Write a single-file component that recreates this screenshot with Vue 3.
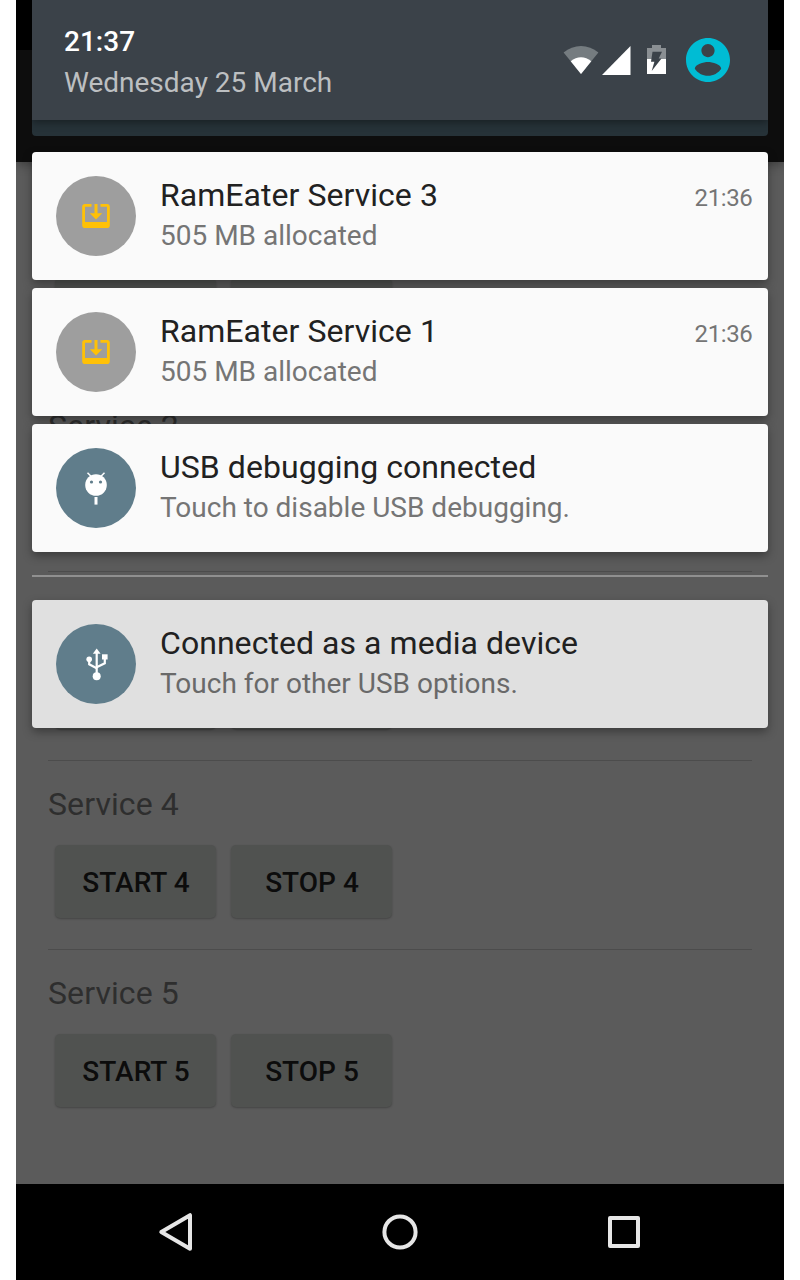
<script setup>
// Sections covered by notification cards leave out their hidden labels.
const services = [
  { id: 1, title: '', start: '', stop: '' },
  { id: 2, title: 'Service 2', start: '', stop: '' },
  { id: 3, title: '', start: '', stop: '' },
  { id: 4, title: 'Service 4', start: 'START 4', stop: 'STOP 4' },
  { id: 5, title: 'Service 5', start: 'START 5', stop: 'STOP 5' },
]
const notifications = [
  { icon: 'ram', title: 'RamEater Service 3', text: '505 MB allocated', time: '21:36' },
  { icon: 'ram', title: 'RamEater Service 1', text: '505 MB allocated', time: '21:36' },
  { icon: 'debug', title: 'USB debugging connected', text: 'Touch to disable USB debugging.' },
  { icon: 'usb', title: 'Connected as a media device', text: 'Touch for other USB options.', low: true },
]
</script>

<template>
  <div class="device">
    <div class="status-strip"></div>
    <div class="app-bar"></div>
    <main class="content">
      <section v-for="s in services" :key="s.id" class="service">
        <h2 class="service-title">{{ s.title }}</h2>
        <div class="buttons">
          <button class="btn">{{ s.start }}</button>
          <button class="btn">{{ s.stop }}</button>
        </div>
      </section>
    </main>
    <nav class="nav-bar">
      <svg class="nav-icon" viewBox="0 0 48 48">
        <path d="M38 7.2v33.6L9.300 24z" fill="none" stroke="#e6e6e6" stroke-width="4" stroke-linejoin="round" />
      </svg>
      <svg class="nav-icon" viewBox="0 0 48 48">
        <circle cx="24" cy="24" r="15.6" fill="none" stroke="#e6e6e6" stroke-width="4" />
      </svg>
      <svg class="nav-icon" viewBox="0 0 48 48">
        <rect x="10" y="10" width="28" height="28" fill="none" stroke="#e6e6e6" stroke-width="4" stroke-linejoin="round" />
      </svg>
    </nav>

    <div class="shade">
      <header class="header">
        <div class="header-main">
          <div class="clock-block">
            <div class="clock">21:37</div>
            <div class="date">Wednesday 25 March</div>
          </div>
          <svg class="wifi" viewBox="0 0 36 30">
            <path d="M.6 7.600C10.500-1.300 25.500-1.300 35.400 7.600L18 29z" fill="#757c80" />
            <path d="M7.700 16.200C14 10.900 22 10.900 28.300 16.200L18 29z" fill="#fff" />
          </svg>
          <svg class="signal" viewBox="0 0 29 29">
            <path d="M28.500 0v29H0z" fill="#fff" />
          </svg>
          <svg class="battery" viewBox="0 0 19 29">
            <path d="M5 0h9v3h5v11H0V3h5z" fill="#8a8f93" />
            <path d="M0 14h19v15H0z" fill="#fff" />
            <path d="M5.500 6.800H15l-3.300 6.700h2.800L4.700 26l2.700-9.200H4z" fill="#3b4249" />
          </svg>
          <svg class="avatar" viewBox="2 2 20 20">
            <path d="M12 2C6.480 2 2 6.480 2 12s4.480 10 10 10 10-4.480 10-10S17.520 2 12 2zm0 2.700c1.660 0 3 1.340 3 3s-1.340 3-3 3-3-1.340-3-3 1.340-3 3-3zm0 14.500c-2.500 0-4.710-1.280-6-3.220.03-1.990 4-3.080 6-3.080s5.970 1.090 6 3.080c-1.290 1.940-3.500 3.220-6 3.220z" fill="#00bcd4" />
          </svg>
        </div>
      </header>

      <div class="list">
        <template v-for="(item, i) in notifications" :key="i">
          <div v-if="item.low" class="speed-bump"></div>
          <article class="card" :class="{ low: item.low }">
            <div class="badge" :class="item.icon">
              <svg v-if="item.icon === 'ram'" class="glyph" viewBox="0 0 48 48" fill="#ffc107">
                <path d="M12.800 12h6.700v2.700H13V30h22V14.700h-6.500V12h6.700c1.500 0 2.600 1.100 2.600 2.600v18.800c0 1.500-1.100 2.600-2.600 2.600H12.800c-1.500 0-2.600-1.100-2.600-2.600V14.600c0-1.500 1.100-2.600 2.600-2.600z" />
                <path d="M22.500 12h3v9.200h4.700L24 27.400 17.800 21.200h4.700z" />
              </svg>
              <svg v-else-if="item.icon === 'debug'" class="glyph" viewBox="0 0 48 48">
                <circle cx="24" cy="21" r="10.800" fill="#fff" />
                <path d="M15.500 8.800l4 4M32.500 8.800l-4 4" stroke="#fff" stroke-width="1.500" />
                <path d="M22.500 33h3v7.600h-3z" fill="#fff" />
                <circle cx="19.500" cy="18" r="1.600" fill="#607d8b" />
                <circle cx="28.500" cy="18" r="1.600" fill="#607d8b" />
              </svg>
              <svg v-else class="glyph" viewBox="0 0 48 48" fill="none" stroke="#fff" stroke-width="2.200">
                <path d="M24.700 36V12" />
                <path d="M17.200 19v5.300l7.500 4" />
                <path d="M32.800 18v5.300l-8.100 4" />
                <path d="M24.700 8.500l3.900 5.300h-7.800z" fill="#fff" stroke="none" />
                <path d="M30 14.300h5.600v5.200H30z" fill="#fff" stroke="none" />
                <circle cx="17.200" cy="19.300" r="2.800" fill="#fff" stroke="none" />
                <circle cx="24.700" cy="36.200" r="4" fill="#fff" stroke="none" />
              </svg>
            </div>
            <div class="body">
              <div class="title">{{ item.title }}</div>
              <div class="text">{{ item.text }}</div>
            </div>
            <time v-if="item.time" class="time">{{ item.time }}</time>
          </article>
        </template>
      </div>
    </div>
  </div>
</template>

<style>
body {
  margin: 0;
  background: #fff;
}
</style>

<style scoped>
.device {
  position: relative;
  display: flex;
  flex-direction: column;
  width: 768px;
  height: 1280px;
  margin: 0 auto;
  overflow: hidden;
  background: #5b5b5b;
  font-family: Roboto, sans-serif;
}
.status-strip {
  flex: 0 0 50px;
  background: #000;
}
.app-bar {
  flex: 0 0 112px;
  background: #0d0d0d;
  box-shadow: 0 2px 10px rgba(0, 0, 0, 0.35);
}
.content {
  flex: 1;
  padding: 32px 32px 0;
}
.service {
  box-sizing: border-box;
  height: 189px;
  padding-top: 24px;
  border-bottom: 1px solid #4c4c4c;
}
.service:last-child {
  border-bottom: 0;
}
.service-title {
  height: 38px;
  margin: 0;
  font-size: 32px;
  line-height: 38px;
  font-weight: 400;
  letter-spacing: 0.1px;
  color: #2e2e2e;
}
.buttons {
  display: flex;
  gap: 15px;
  padding: 22px 7px 0;
}
.btn {
  width: 161px;
  height: 73px;
  padding: 2px 0 0 1px;
  border: 0;
  border-radius: 5px;
  background: #505250;
  box-shadow: 0 1px 2px rgba(0, 0, 0, 0.25);
  font: 500 28px Roboto, sans-serif;
  color: #0c0c0c;
}
.nav-bar {
  flex: 0 0 96px;
  display: flex;
  align-items: center;
  justify-content: center;
  gap: 176px;
  background: #000;
}
.nav-icon {
  width: 48px;
  height: 48px;
}
.shade {
  position: absolute;
  top: 0;
  left: 16px;
  width: 736px;
}
.header {
  height: 136px;
  border-radius: 0 0 4px 4px;
  background: #263238;
  overflow: hidden;
}
.header-main {
  display: flex;
  align-items: center;
  box-sizing: border-box;
  height: 120px;
  padding: 0 38px 0 32px;
  background: #3b4249;
  box-shadow: 0 2px 8px rgba(0, 0, 0, 0.4);
}
.clock-block {
  flex: 1;
  padding-top: 3px;
}
.clock {
  font-size: 28px;
  line-height: 41px;
  font-weight: 500;
  color: #fff;
}
.date {
  font-size: 28px;
  line-height: 41px;
  color: #bcbfc1;
}
.wifi {
  width: 36px;
  height: 30px;
}
.signal {
  width: 29px;
  height: 29px;
  margin-left: 3px;
}
.battery {
  width: 19px;
  height: 29px;
  margin: 0 20px 1px 16px;
}
.avatar {
  width: 44px;
  height: 44px;
}
.list {
  display: flex;
  flex-direction: column;
  gap: 8px;
  padding-top: 16px;
}
.card {
  display: flex;
  box-sizing: border-box;
  height: 128px;
  padding: 24px 16px 0 24px;
  border-radius: 4px;
  background: #fafafa;
  box-shadow: 0 4px 10px rgba(0, 0, 0, 0.35);
}
.card.low {
  background: #e0e0e0;
}
.speed-bump {
  height: 2px;
  margin: 15px 0;
  background: #909090;
}
.badge {
  display: flex;
  align-items: center;
  justify-content: center;
  width: 80px;
  height: 80px;
  border-radius: 50%;
  background: #607d8b;
}
.badge.ram {
  background: #9e9e9e;
}
.glyph {
  width: 48px;
  height: 48px;
}
.body {
  flex: 1;
  margin-left: 24px;
}
.title {
  font-size: 32px;
  line-height: 38px;
  letter-spacing: 0.05px;
  color: #212121;
}
.text {
  margin-top: 5px;
  font-size: 28px;
  line-height: 34px;
  color: #757575;
}
.time {
  padding-top: 7px;
  margin-right: -0.4px;
  font-size: 24px;
  line-height: 30px;
  letter-spacing: -0.4px;
  color: #757575;
}
.low .text {
  color: #696969;
}
</style>
